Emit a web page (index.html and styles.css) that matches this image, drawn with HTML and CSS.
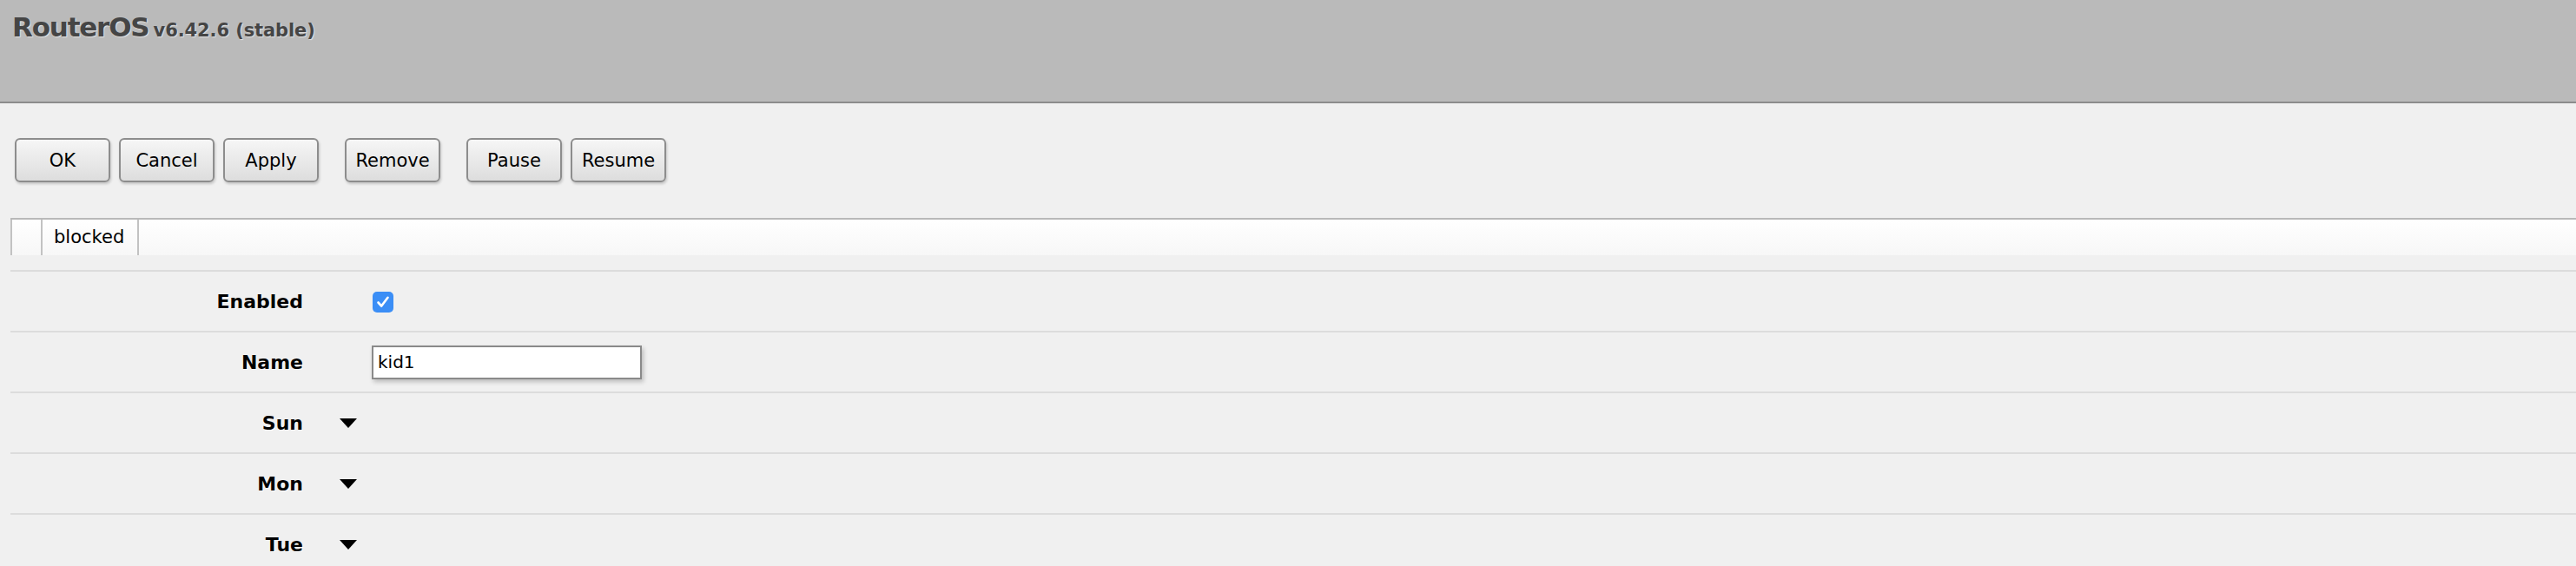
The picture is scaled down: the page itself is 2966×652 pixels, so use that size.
FILE: index.html
```html
<!DOCTYPE html>
<html>
<head>
<meta charset="utf-8">
<title>RouterOS</title>
<link rel="stylesheet" href="styles.css">
</head>
<body>
<div class="header">
  <span class="brand">RouterOS</span> <span class="version">v6.42.6 (stable)</span>
</div>
<div class="toolbar">
  <div class="group">
    <button class="btn">OK</button>
    <button class="btn">Cancel</button>
    <button class="btn">Apply</button>
  </div>
  <div class="group">
    <button class="btn">Remove</button>
  </div>
  <div class="group">
    <button class="btn">Pause</button>
    <button class="btn">Resume</button>
  </div>
</div>
<div class="tabs">
  <div class="tab tab-empty"></div>
  <div class="tab">blocked</div>
</div>
<div class="form">
  <div class="row">
    <div class="label">Enabled</div>
    <div class="toggle"></div>
    <div class="value">
      <span class="checkbox">
        <svg width="24" height="24" viewBox="0 0 24 24"><path d="M6.5 12.5 L10.2 16.5 L17.5 6.8" fill="none" stroke="#fff" stroke-width="2.6" stroke-linecap="round" stroke-linejoin="round"/></svg>
      </span>
    </div>
  </div>
  <div class="row">
    <div class="label">Name</div>
    <div class="toggle"></div>
    <div class="value"><input class="text" type="text" value="kid1"></div>
  </div>
  <div class="row">
    <div class="label">Sun</div>
    <div class="toggle"><span class="tri"></span></div>
    <div class="value"></div>
  </div>
  <div class="row">
    <div class="label">Mon</div>
    <div class="toggle"><span class="tri"></span></div>
    <div class="value"></div>
  </div>
  <div class="row">
    <div class="label">Tue</div>
    <div class="toggle"><span class="tri"></span></div>
    <div class="value"></div>
  </div>
</div>
</body>
</html>
```
FILE: styles.css
```css
html, body {
  margin: 0;
  padding: 0;
  background: #f0f0f0;
  font-family: "DejaVu Sans", Verdana, sans-serif;
  color: #000;
  overflow: hidden;
}

.header {
  box-sizing: border-box;
  background: #bababa;
  border-bottom: 2px solid #8c8c8c;
  height: 119px;
  padding: 13px 0 0 14px;
  line-height: 36px;
  color: #454545;
  white-space: nowrap;
}

.brand {
  font-size: 31px;
  font-weight: bold;
  letter-spacing: -1.2px;
  text-shadow: 1px 1px 1px #e4e4e4;
}

.version {
  font-size: 21px;
  font-weight: bold;
  letter-spacing: -0.1px;
  text-shadow: 1px 1px 1px #e4e4e4;
}

.toolbar {
  display: flex;
  gap: 30px;
  margin: 40px 0 0 17px;
}

.group {
  display: flex;
  gap: 10px;
}

.btn {
  width: 110px;
  height: 51px;
  box-sizing: border-box;
  border: 2px solid #8d8d8d;
  border-radius: 6px;
  background: linear-gradient(#f6f6f6, #dddddd);
  box-shadow: 1px 2px 3px rgba(0, 0, 0, 0.18);
  font-family: "DejaVu Sans", Verdana, sans-serif;
  font-size: 21px;
  color: #000;
  padding: 0;
}

.tabs {
  display: flex;
  margin: 41px 0 0 12px;
  height: 43px;
  box-sizing: border-box;
  border-top: 2px solid #b9b9b9;
  background: linear-gradient(#ffffff, #f7f7f7);
}

.tab {
  border-left: 2px solid #c2c2c2;
  padding: 0 15px 0 13px;
  font-size: 21px;
  line-height: 41px;
}

.tab-empty {
  padding: 0;
  box-sizing: border-box;
  width: 35px;
}

.tab:last-child {
  border-right: 2px solid #c2c2c2;
}

.form {
  margin: 17px 0 0 12px;
}

.row {
  display: grid;
  grid-template-columns: 350px 66px 1fr;
  height: 70px;
  box-sizing: border-box;
  border-top: 2px solid #dcdcdc;
  align-items: center;
}

.label {
  text-align: right;
  padding-right: 13px;
  font-size: 22px;
  font-weight: bold;
  text-shadow: 1px 1px 0 #fff;
}

.toggle {
  padding-left: 29px;
  display: flex;
  align-items: center;
}

.tri {
  width: 0;
  height: 0;
  border-left: 10px solid transparent;
  border-right: 10px solid transparent;
  border-top: 11px solid #000;
}

.value {
  display: flex;
  align-items: center;
}

.checkbox {
  display: block;
  width: 24px;
  height: 24px;
  margin-left: 1px;
  margin-top: 2px;
  border-radius: 5px;
  background: #3b8ef6;
}

.checkbox svg {
  display: block;
}

.text {
  width: 311px;
  height: 39px;
  box-sizing: border-box;
  border: 2px solid #8a8a8a;
  box-shadow: 2px 3px 5px rgba(0, 0, 0, 0.22);
  background: #fff;
  padding: 0 0 0 5px;
  font-family: "DejaVu Sans", Verdana, sans-serif;
  font-size: 20px;
  color: #000;
  outline: none;
}
```
